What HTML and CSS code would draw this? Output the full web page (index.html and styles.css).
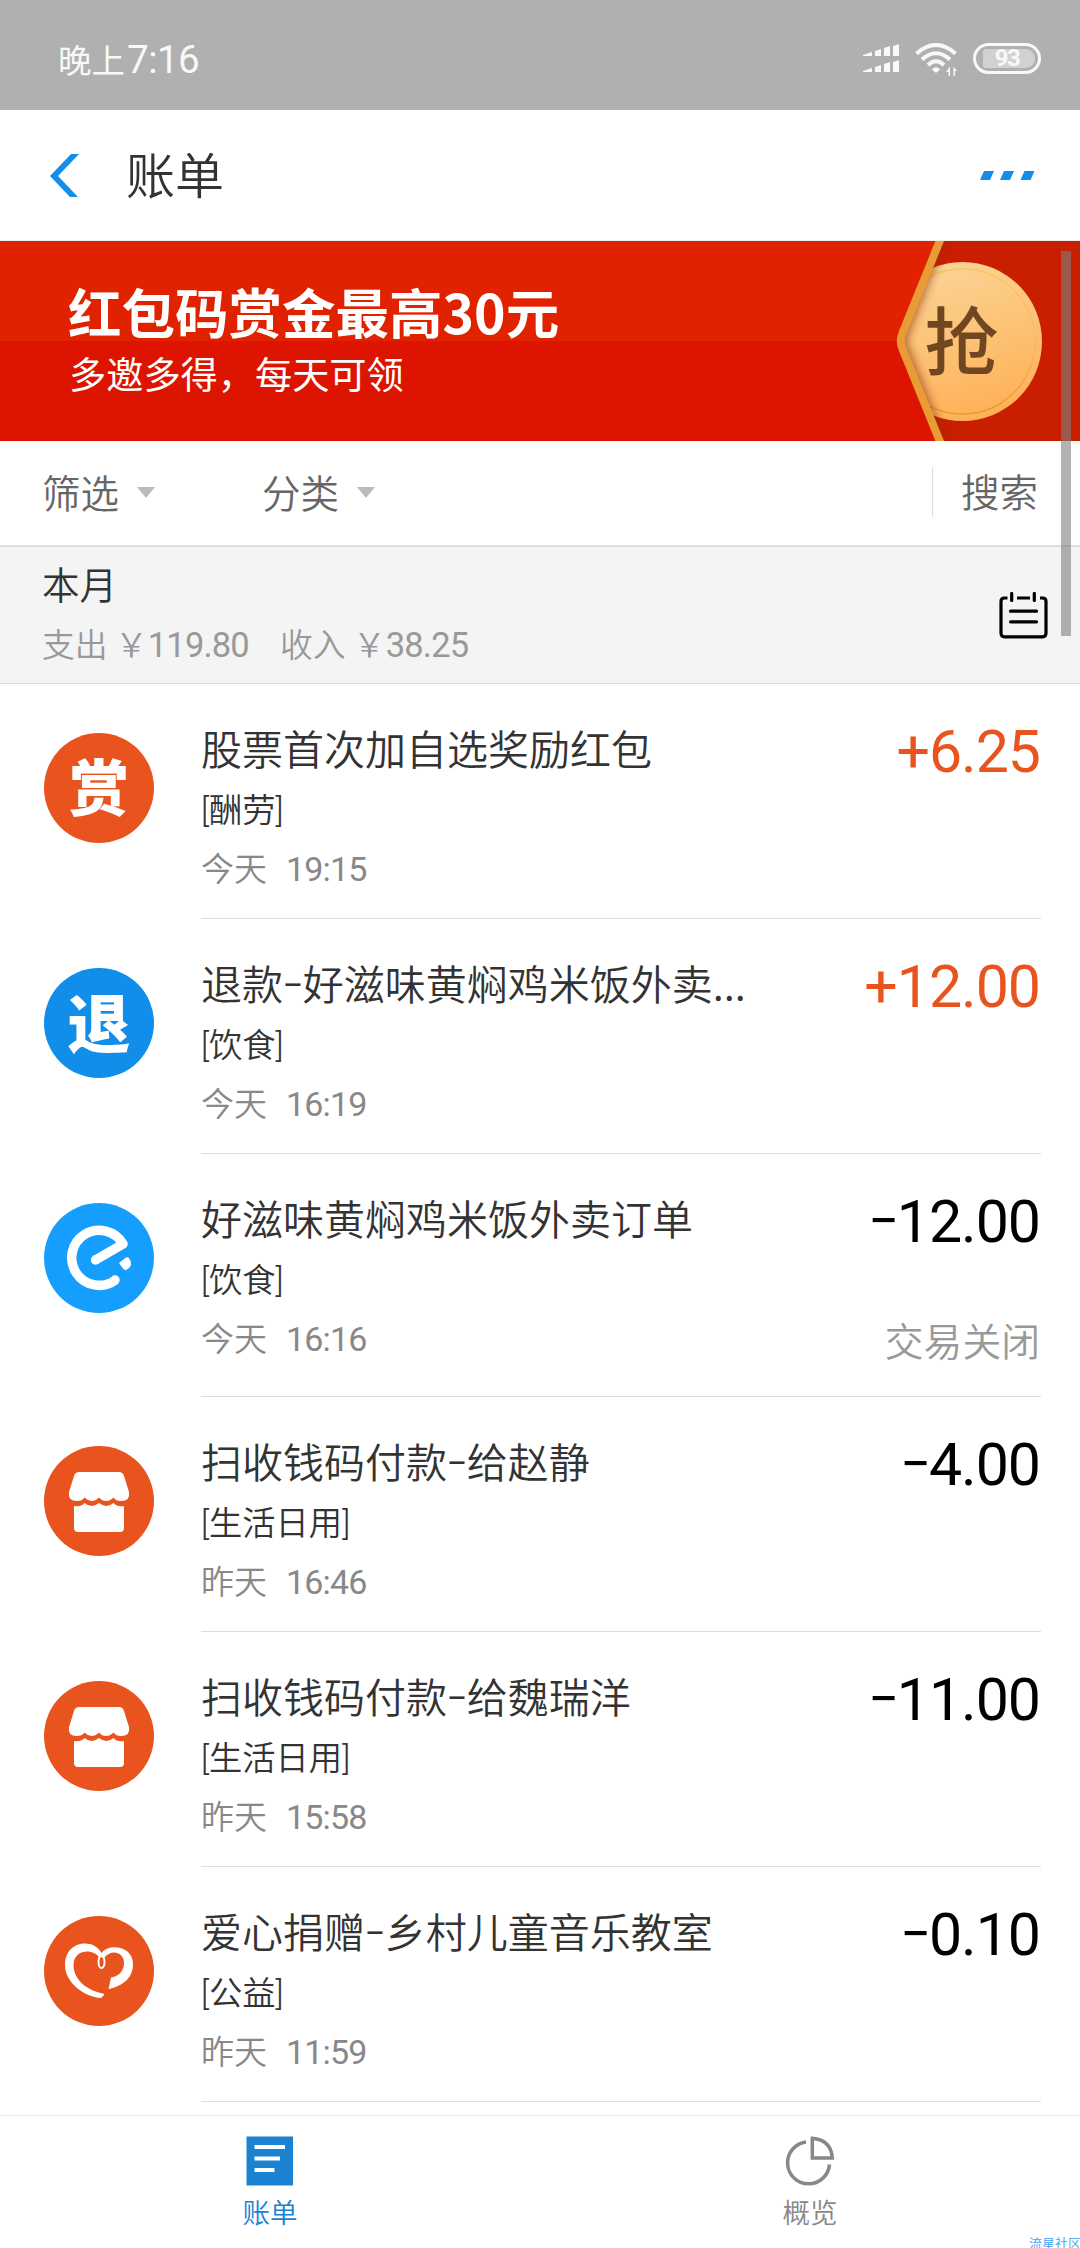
FILE: index.html
```
<!DOCTYPE html>
<html lang="zh-CN">
    <head>
        <meta charset="UTF-8">
        <meta name="viewport" content="width=device-width, initial-scale=1.0">
        <title>账单</title>

        <link rel="stylesheet" href="styles.css">
    </head>
    <body>
        <div class="status-bar">
            <span class="clock">晚上<span>7:16</span></span>
            <div class="status-icons">
                <svg class="signal" width="36" height="28" viewBox="0 0 36 28" fill="#f8f8f8">
                    <path d="M0 11L9 8V12H0ZM12 7L18 5V12H12ZM21 4L27 2V12H21ZM30 2L36 0V12H30Z"/>
                    <path d="M0 27L9 24V28H0ZM12 23L18 21V28H12ZM21 20L27 18V28H21ZM30 18L36 16V28H30Z"/>
                </svg>
                <svg class="wifi" width="42" height="33" viewBox="0 0 42 33" fill="none" stroke="#f8f8f8" stroke-width="4">
                    <path d="M1.5 10.5Q21 -6.500 40.500 10.500M7 16.500Q21 4 35 16.500M13 22Q21 14.500 29 22"/>
                    <path d="M17 26.500Q21 22 25 26.500L21 30Z" fill="#f8f8f8" stroke="none"/>
                    <path d="M31 29L35 23.500V33H33.500V29ZM42 28L38.500 23.500V33H40V28Z" fill="#f8f8f8" stroke="none"/>
                </svg>
                <div class="battery"><span>93</span></div>
            </div>
        </div>

        <header>
            <svg class="back" width="29" height="43" viewBox="0 0 29 43" fill="#108ee9">
                <path d="M21 0H29L8 22L28 43H20L0 22Z"/>
            </svg>
            <h1>账单</h1>
            <svg class="more" width="55" height="9" viewBox="0 0 55 9" fill="#108ee9">
                <path d="M4 0H14L10 9H0ZM24 0H34L30 9H20ZM44.500 0H54.500L50.500 9H40.500Z"/>
            </svg>
        </header>

        <section class="banner">
            <div>
                <h2>红包码赏金最高30元</h2>
                <p>多邀多得，每天可领</p>
            </div>
            <svg width="200" height="200" viewBox="0 0 200 200">
                <defs>
                    <linearGradient id="coin" x1="0.3" y1="0" x2="0.6" y2="1">
                        <stop offset="0" stop-color="#fad596"/>
                        <stop offset="1" stop-color="#ffb056"/>
                    </linearGradient>
                    <linearGradient id="ring" x1="0" y1="0" x2="0" y2="1">
                        <stop offset="0" stop-color="#fcc658"/>
                        <stop offset="0.5" stop-color="#fabb60"/>
                        <stop offset="1" stop-color="#e5992e"/>
                    </linearGradient>
                    <clipPath id="pocket"><path d="M60 0L21 93Q18 100 21 107L60 200H200V0Z"/></clipPath>
                    <filter id="soft" x="-50%" y="-10%" width="200%" height="120%"><feGaussianBlur stdDeviation="5"/></filter>
                </defs>
                <g clip-path="url(#pocket)">
                    <rect width="200" height="200" fill="#ca1e00"/>
                    <circle cx="82.500" cy="100.500" r="79.500" fill="url(#coin)"/>
                    <circle cx="82.500" cy="100.500" r="72.500" fill="none" stroke="url(#ring)" stroke-width="1.500"/>
                    <path d="M60 -4L22 93Q19 100 22 107L60 204" fill="none" stroke="#8c2a10" stroke-opacity="0.65" stroke-width="13" filter="url(#soft)"/>
                    <text class="grab" x="81.500" y="128" text-anchor="middle">抢</text>
                </g>
                <path d="M60.500 -2L22.500 92Q19 100 22.500 108L60.500 202" fill="none" stroke="#e99c33" stroke-width="8"/>
            </svg>
        </section>

        <nav class="filters">
            <a class="drop">筛选</a>
            <a class="drop">分类</a>
            <a class="search">搜索</a>
        </nav>

        <section class="month">
            <div>
                <h3>本月</h3>
                <p><span class="total">支出 ￥<b>119.80</b></span><span class="total">收入 ￥<b>38.25</b></span></p>
            </div>
            <svg width="49" height="47" viewBox="0 0 49 47" fill="none" stroke="#000" stroke-width="3.200">
                <path d="M8.500 6H5.500Q2 6 2 9.500V41Q2 44.800 5.500 44.800H43.500Q47 44.800 47 41V9.500Q47 6 43.500 6H41M18 6H31"/>
                <path d="M12.700 1.500V8.500M35.300 1.500V8.500M11.500 19.200H37.500M11.500 29.800H37.500" stroke-linecap="round"/>
            </svg>
        </section>

        <main class="bills">
            <article class="bill">
                <div class="icon orange">赏</div>
                <div class="info">
                    <div class="desc">
                        <h4>股票首次加自选奖励红包</h4>
                        <p>[酬劳]</p>
                        <time>今天<span>19:15</span></time>
                    </div>
                    <div class="money"><strong class="income">+6.25</strong></div>
                </div>
            </article>

            <article class="bill">
                <div class="icon blue refund">退</div>
                <div class="info">
                    <div class="desc">
                        <h4>退款<i>-</i>好滋味黄焖鸡米饭外卖...</h4>
                        <p>[饮食]</p>
                        <time>今天<span>16:19</span></time>
                    </div>
                    <div class="money"><strong class="income">+12.00</strong></div>
                </div>
            </article>

            <article class="bill closed">
                <div class="icon">
                    <svg width="110" height="110" viewBox="0 0 110 110">
                        <circle cx="55" cy="55" r="55" fill="#169eff"/>
                        <path d="M51.500 57L79 41A27.500 27.500 0 1 0 71.500 77" fill="none" stroke="#fff" stroke-width="9.500" stroke-linejoin="round"/>
                        <circle cx="51.500" cy="57" r="4.700" fill="#fff"/>
                        <circle cx="71" cy="77" r="4.700" fill="#fff"/>
                        <path d="M75.500 59.500L82 54.500Q84.500 53.500 85.500 56Q89 62 85 65L82 67Q80.500 67.500 79.500 66L75.500 61Q75 60 75.500 59.500Z" fill="#fff"/>
                    </svg>
                </div>
                <div class="info">
                    <div class="desc">
                        <h4>好滋味黄焖鸡米饭外卖订单</h4>
                        <p>[饮食]</p>
                        <time>今天<span>16:16</span></time>
                    </div>
                    <div class="money"><strong><i>-</i>12.00</strong><em>交易关闭</em></div>
                </div>
            </article>

            <article class="bill">
                <div class="icon">
                    <svg width="110" height="110" viewBox="0 0 110 110">
                        <circle cx="55" cy="55" r="55" fill="#e9541e"/>
                        <g id="shop" fill="#fff">
                            <path d="M35.500 26H74.500Q79 26 80 30L85 46Q86.500 55 77 55Q72 55 69.500 51.500Q66 55 62 55Q58 55 55 51.500Q51.500 55 47.500 55Q44 55 40.500 51.500Q38 55 33 55Q23.500 55 25 46L30 30Q31 26 35.500 26Z"/>
                            <path d="M30 60Q37 61 40.500 57Q47.500 63 55 57Q62.500 63 69.500 57Q73 61 80 60V82Q80 86 76 86H34Q30 86 30 82Z"/>
                        </g>
                    </svg>
                </div>
                <div class="info">
                    <div class="desc">
                        <h4>扫收钱码付款<i>-</i>给赵静</h4>
                        <p>[生活日用]</p>
                        <time>昨天<span>16:46</span></time>
                    </div>
                    <div class="money"><strong><i>-</i>4.00</strong></div>
                </div>
            </article>

            <article class="bill">
                <div class="icon">
                    <svg width="110" height="110" viewBox="0 0 110 110">
                        <circle cx="55" cy="55" r="55" fill="#e9541e"/>
                        <use href="#shop"/>
                    </svg>
                </div>
                <div class="info">
                    <div class="desc">
                        <h4>扫收钱码付款<i>-</i>给魏瑞洋</h4>
                        <p>[生活日用]</p>
                        <time>昨天<span>15:58</span></time>
                    </div>
                    <div class="money"><strong><i>-</i>11.00</strong></div>
                </div>
            </article>

            <article class="bill">
                <div class="icon">
                    <svg width="110" height="110" viewBox="0 0 110 110">
                        <circle cx="55" cy="55" r="55" fill="#e9541e"/>
                        <path d="M57.500 37C50 22 21 24 21 49C21 66 39 80 56 82Q58 82 60.500 78C45 75 29.500 65 29.500 49C29.500 33 50 32 55.500 42L57.500 41L60 42C66 33 80 35 80 47C80 56 73 61 67 61.500L64.500 73C79 70 89 62 89 48C89 30 65 27 57.500 37Z" fill="#fff"/>
                        <ellipse cx="57.500" cy="46" rx="3" ry="6" fill="none" stroke="#fff" stroke-width="2"/>
                    </svg>
                </div>
                <div class="info">
                    <div class="desc">
                        <h4>爱心捐赠<i>-</i>乡村儿童音乐教室</h4>
                        <p>[公益]</p>
                        <time>昨天<span>11:59</span></time>
                    </div>
                    <div class="money"><strong><i>-</i>0.10</strong></div>
                </div>
            </article>
        </main>

        <footer>
            <a class="tab active">
                <svg width="50" height="50" viewBox="0 0 50 50">
                    <rect x="1.500" y="0.500" width="46.500" height="49" fill="#1b82d2"/>
                    <path d="M9.500 11H40M9.500 22.500H35M9.500 34H29.500" stroke="#fff" stroke-width="4"/>
                </svg>
                账单
            </a>
            <a class="tab">
                <svg width="50" height="50" viewBox="0 0 50 50" fill="none" stroke="#888" stroke-width="3.500">
                    <path d="M21 6A21 21 0 1 0 44.500 28.500"/>
                    <path d="M27.300 2.300V22H47.300Q46 4 27.300 2.300Z"/>
                </svg>
                概览
            </a>
        </footer>

        <div class="scrollbar"></div>
        <span class="watermark">流星社区</span>
    </body>
</html>
```
FILE: styles.css
```
* {
    padding: 0px;
    margin: 0px;
    box-sizing: border-box;
    font-family: "Noto Sans CJK SC", sans-serif;
    font-weight: 350;
}

body {
    position: relative;
    width: 1080px;
    height: 2248px;
    background-color: #fff;
    overflow: hidden;
    display: flex;
    flex-direction: column;
}

svg {
    display: block;
    flex: none;
}

i, em {
    font-style: normal;
}

.status-bar {
    height: 110px;
    padding: 0 39px 0 58px;
    background-color: #b0b0b0;
    color: #f8f8f8;
    display: flex;
    justify-content: space-between;
}

.clock {
    font-size: 33.5px;
    line-height: 117px;
    font-weight: 400;
}

.clock span {
    margin-left: 2px;
    font-family: Roboto, sans-serif;
    font-size: 38.5px;
    font-weight: 400;
    line-height: 1;
    letter-spacing: -0.5px;
}

.status-icons {
    display: flex;
    align-items: flex-start;
    padding-top: 43px;
}

.signal {
    margin-top: 1px;
}

.wifi {
    margin: 0 16px;
}

.battery {
    width: 68px;
    height: 31px;
    padding: 3px 3px 3px 7px;
    border: 3px solid #f8f8f8;
    border-radius: 16px;
}

.battery span {
    display: block;
    height: 19px;
    padding-right: 4px;
    border-radius: 3px 10px 10px 3px;
    background-color: #d1d1d1;
    font-family: Roboto, sans-serif;
    font-size: 24px;
    font-weight: 700;
    line-height: 19px;
    letter-spacing: -1.5px;
    text-align: center;
}

header {
    height: 131px;
    padding: 0 45px 0 50px;
    border-bottom: 1px solid #eee;
    display: flex;
    align-items: center;
}

header h1 {
    margin: -5px auto 0 47px;
    font-size: 49px;
    color: #333;
}

.banner {
    height: 200px;
    padding-left: 68px;
    background: linear-gradient(#e02200 50%, #dc1400 50%);
    color: #fff;
    display: flex;
    justify-content: space-between;
}

.banner h2 {
    padding-top: 35px;
    font-size: 53.5px;
    font-weight: 700;
    line-height: 70px;
}

.banner p {
    padding-left: 1px;
    font-size: 37.2px;
    font-weight: 400;
    line-height: 55px;
}

.grab {
    font-size: 74px;
    font-weight: 500;
    fill: #714722;
}

.filters {
    height: 106px;
    padding: 0 42px 2px;
    border-bottom: 2px solid #ddd;
    font-size: 38.5px;
    color: #666;
    display: flex;
    align-items: center;
}

.drop {
    display: flex;
    align-items: center;
    width: 220px;
    line-height: 54px;
    margin-top: -3px;
}

.drop::after {
    content: "";
    margin: 3px 0 0 18px;
    border-left: 9.5px solid transparent;
    border-right: 9.5px solid transparent;
    border-top: 11px solid #bbb;
}

.search {
    height: 50px;
    margin-left: auto;
    padding-left: 28px;
    border-left: 1px solid #ddd;
    line-height: 47px;
}

.month {
    height: 137px;
    padding: 0 32px 0 42px;
    background-color: #f4f4f4;
    border-bottom: 1px solid #ddd;
    display: flex;
    justify-content: space-between;
    align-items: center;
}

.month h3 {
    margin-top: -4px;
    font-size: 37.5px;
    line-height: 60px;
    color: #333;
}

.month p {
    font-size: 32.8px;
    line-height: 60px;
    color: #999;
}

.month b {
    font-family: Roboto, sans-serif;
    font-size: 34.5px;
    font-weight: 400;
    line-height: 1;
    letter-spacing: -0.8px;
}

.total {
    margin-right: 31px;
}

.bill {
    height: 235px;
    padding: 0 39px 0 44px;
    display: flex;
}

.bill.closed {
    height: 243px;
}

.icon {
    width: 110px;
    height: 110px;
    margin: 49px 47px 0 0;
    border-radius: 50%;
    color: #fff;
    font-size: 60px;
    font-weight: 900;
    line-height: 104px;
    text-align: center;
}

.orange {
    background-color: #e9541e;
}

.blue {
    background-color: #108ee9;
}

.refund {
    font-size: 63px;
}

.info {
    flex: 1;
    border-bottom: 1px solid #ddd;
    display: flex;
    justify-content: space-between;
}

.desc {
    padding-top: 32px;
    color: #333;
    white-space: nowrap;
}

.desc h4 {
    height: 62px;
    font-size: 41px;
    line-height: 62px;
}

.desc p {
    height: 60px;
    padding-top: 3px;
    font-family: Roboto, "Noto Sans CJK SC", sans-serif;
    font-size: 33.3px;
    line-height: 59px;
}

.desc time {
    display: block;
    font-size: 33px;
    line-height: 58px;
    color: #888;
}

.desc time span {
    margin-left: 19px;
    font-family: Roboto, sans-serif;
    font-size: 34px;
    font-weight: 400;
    line-height: 1;
    letter-spacing: -0.8px;
}

/* wide minus sign */
.bill i {
    display: inline-block;
    line-height: 0.7;
    transform: translateY(-0.09em) scaleX(1.45);
    padding: 0 0.07em;
}

.money i {
    font-weight: 400;
}

.money {
    padding-top: 35px;
    display: flex;
    flex-direction: column;
    align-items: flex-end;
}

.money strong {
    height: 66px;
    padding-right: 1px;
    font-family: Roboto, sans-serif;
    font-size: 59px;
    font-weight: 400;
    line-height: 66px;
    letter-spacing: -1px;
}

.money em {
    margin-top: 56px;
    padding-right: 1px;
    font-size: 38.8px;
    line-height: 56px;
    color: #999;
}

.income {
    color: #e9541e;
}

footer {
    height: 133px;
    margin-top: auto;
    border-top: 1px solid #eee;
    display: flex;
}

.tab {
    flex: 1;
    padding-top: 20px;
    display: flex;
    flex-direction: column;
    align-items: center;
    gap: 5px;
    font-size: 27.5px;
    line-height: 40px;
    color: #888;
}

.tab.active {
    color: #1b82d2;
}

.scrollbar {
    position: absolute;
    top: 251px;
    left: 1061px;
    width: 10px;
    height: 385px;
    background-color: rgba(127, 127, 127, 0.6);
}

.watermark {
    position: absolute;
    right: -1px;
    bottom: -5px;
    font-size: 13px;
    line-height: 20px;
    color: #3fa2f5;
}
```
